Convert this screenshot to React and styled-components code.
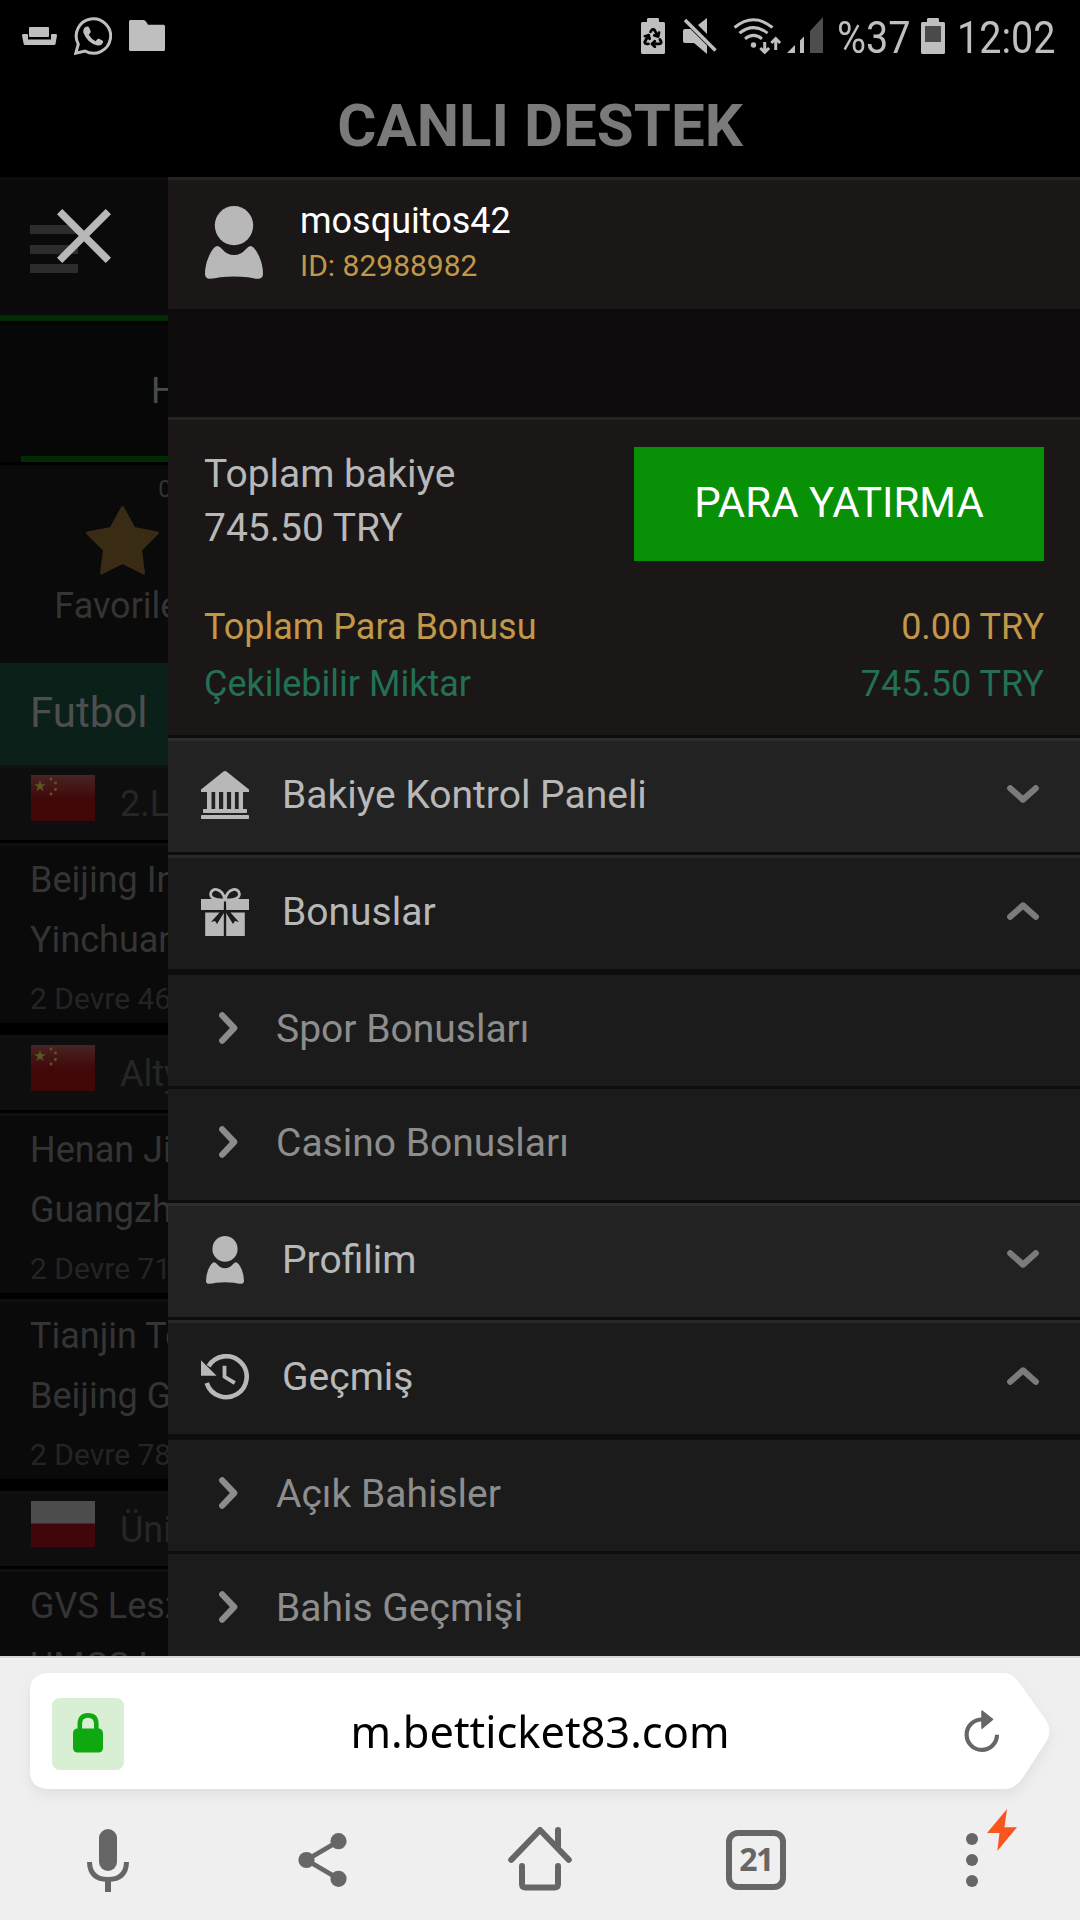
import React from 'react';
import styled, { createGlobalStyle } from 'styled-components';
import { Recycle } from 'lucide-react';

const matches = [
    { league: '2.Liga', flag: 'cn', games: [['Beijing Institute', 'Yinchuan', '2 Devre 46']] },
    {
        league: 'Altyapı',
        flag: 'cn',
        games: [
            ['Henan Jianye', 'Guangzhou', '2 Devre 71'],
            ['Tianjin Teda', 'Beijing Guoan', '2 Devre 78'],
        ],
    },
    { league: 'Üniversite', flag: 'pl', games: [['GVS Leszno', 'UMCS Lublin', '']] },
];

const menu = [
    { label: 'Bakiye Kontrol Paneli', icon: BankIcon },
    { label: 'Bonuslar', icon: GiftIcon, items: ['Spor Bonusları', 'Casino Bonusları'] },
    { label: 'Profilim', icon: UserIcon },
    { label: 'Geçmiş', icon: HistoryIcon, items: ['Açık Bahisler', 'Bahis Geçmişi'] },
];

export default function App() {
    return (
        <Screen>
            <GlobalStyle />
            <StatusBar />
            <SupportBar>CANLI DESTEK</SupportBar>
            <Main>
                <SportsPage />
                <Drawer />
                <CloseButton aria-label="close">
                    <svg width="54" height="54" viewBox="0 0 54 54" stroke="#b8b8b8" strokeWidth="7.5">
                        <path d="M2.6 2.6L51.4 51.4M51.4 2.6L2.6 51.4" />
                    </svg>
                </CloseButton>
            </Main>
            <BrowserBar />
        </Screen>
    );
}

function StatusBar() {
    return (
        <Status>
            <StatusGroup $gap={17}>
                <svg width="35" height="18" viewBox="0 0 35 18" fill="currentColor">
                    <rect x="7" width="20" height="10" rx="1" />
                    <path d="M1 7H5Q6 7 6 8V12.5H29V8Q29 7 30 7H34Q35 7 35 8.5L33.5 17Q33 18 32 18H3Q2 18 1.7 17L0 8.5Q0 7 1 7Z" />
                </svg>
                <svg width="38" height="38" viewBox="0 0 38 38">
                    <path d="M1.8 36.2L4.3 27.2A17.2 17.2 0 1 1 11 34Z" fill="none" stroke="currentColor" strokeWidth="3" />
                    <path d="M12.8 9.6Q14.6 9.3 15.2 10.8L16.6 14Q17 15 16.2 16L14.8 17.8Q17.7 22.6 21.6 24.3L23.3 22.3Q24 21.4 25 21.8L28.4 23.5Q29.6 24.1 29 25.6Q27.6 29 23.6 28.5Q13.5 26.5 9.3 15.5Q8.8 10.5 12.8 9.6Z" fill="currentColor" />
                </svg>
                <svg width="36" height="32" viewBox="0 0 36 32" fill="currentColor">
                    <path d="M1.5 0H14.5Q16 0 17 1.5L19 4.7H34.5Q36 4.7 36 6.2V29.5Q36 31 34.5 31H1.5Q0 31 0 29.5V1.5Q0 0 1.5 0Z" />
                </svg>
            </StatusGroup>
            <StatusGroup $gap={0}>
                <svg width="24" height="36" viewBox="0 0 24 36">
                    <path d="M7 0H17Q18 0 18 1.5V4H22.5Q24 4 24 5.5V34.5Q24 36 22.5 36H1.5Q0 36 0 34.5V5.5Q0 4 1.5 4H6V1.5Q6 0 7 0Z" fill="currentColor" />
                    <Recycle x="1" y="8.5" width="22" height="22" color="#000" strokeWidth={3} />
                </svg>
                <MuteIcon width="34" height="36" viewBox="0 0 34 36" fill="currentColor">
                    <path d="M24 0L15 7L24 16Z" />
                    <path d="M0 13Q0 11 2 11H7.5L24 27.5V36L11 25H2Q0 25 0 23Z" />
                    <path d="M2 2L32.5 32.5" stroke="currentColor" strokeWidth="3.6" />
                </MuteIcon>
                <WifiIcon width="49" height="36" viewBox="0 0 49 36" fill="none" stroke="currentColor" strokeWidth="3">
                    <path d="M1.5 9.5Q20.5 -6 39.5 9.5M6.5 15.2Q20.5 4 34.5 15.2M12 20.8Q20.5 14 29 20.8" />
                    <circle cx="20.5" cy="27" r="2.7" fill="currentColor" stroke="none" />
                    <path d="M31.7 24V34M27.3 30L31.7 34.3L36.1 30M42.7 32V21M38.3 25L42.7 20.7L47.1 25" />
                </WifiIcon>
                <SignalIcon width="36" height="36" viewBox="0 0 36 36" fill="currentColor">
                    <path d="M0 36L8 28V36ZM13 23.5L17 19.5V36H13Z" />
                    <path d="M23 14L36 0V36H23Z" fill="#4d4d4d" />
                </SignalIcon>
                <StatusText $width={70} $left={14}>%37</StatusText>
                <BatteryIcon width="24" height="36" viewBox="0 0 24 36" fill="currentColor">
                    <path d="M7 0H17Q18 0 18 1.5V4H22.5Q24 4 24 5.5V34.5Q24 36 22.5 36H1.5Q0 36 0 34.5V5.5Q0 4 1.5 4H6V1.5Q6 0 7 0Z" />
                    <rect x="4" y="8" width="16" height="16" fill="#4a4a4a" />
                </BatteryIcon>
                <StatusText $width={99} $left={12}>12:02</StatusText>
            </StatusGroup>
        </Status>
    );
}

function SportsPage() {
    return (
        <Sports>
            <SportsHeader>
                <Burger><i /><i /><i /></Burger>
            </SportsHeader>
            <SportsTab>Hepsi</SportsTab>
            <Favorites>
                <Count>0</Count>
                <Star width="75" height="71" viewBox="-1 -1 75 71">
                    <path d="M36.5 1.5L48 22.5L71.5 27L54.5 44L57.5 67L36.5 56.5L15.5 67L18.5 44L1.5 27L25 22.5Z" />
                </Star>
                <span>Favoriler</span>
            </Favorites>
            <SportTitle>Futbol</SportTitle>
            {matches.map((group) => (
                <React.Fragment key={group.league}>
                    <League>
                        <Flag country={group.flag} />
                        <span>{group.league}</span>
                    </League>
                    <Games>
                        {group.games.map(([home, away, time]) => (
                            <Game key={home}>
                                <span>{home}</span>
                                <span>{away}</span>
                                <GameTime>{time}</GameTime>
                            </Game>
                        ))}
                    </Games>
                </React.Fragment>
            ))}
        </Sports>
    );
}

function Flag({ country }) {
    if (country === 'pl') {
        return (
            <svg width="64" height="46" viewBox="0 0 64 46">
                <rect width="64" height="46" fill="#42060a" />
                <rect width="64" height="22.5" fill="#4c4c4c" />
            </svg>
        );
    }
    return (
        <svg width="64" height="46" viewBox="0 0 64 46">
            <defs>
                <linearGradient id="gloss" x1="0" y1="0" x2="0" y2="1">
                    <stop offset="0" stopColor="#482424" />
                    <stop offset="0.5" stopColor="#42090b" />
                    <stop offset="1" stopColor="#400608" />
                </linearGradient>
            </defs>
            <rect width="64" height="46" fill="url(#gloss)" />
            <path d="M9 5L10.4 9.2H14.7L11.2 11.7L12.5 16L9 13.4L5.5 16L6.8 11.7L3.3 9.2H7.6Z" fill="#5a5a1c" />
            <g fill="#5a5a1c">
                <circle cx="20" cy="4" r="1.4" />
                <circle cx="24.5" cy="8" r="1.4" />
                <circle cx="24.5" cy="14.5" r="1.4" />
                <circle cx="20" cy="19" r="1.4" />
            </g>
        </svg>
    );
}

function Drawer() {
    return (
        <Panel>
            <Profile>
                <UserIcon width="58" height="73" />
                <div>
                    <UserName>mosquitos42</UserName>
                    <UserId>ID: 82988982</UserId>
                </div>
            </Profile>
            <Balance>
                <BalanceTop>
                    <div>
                        <p>Toplam bakiye</p>
                        <p>745.50 TRY</p>
                    </div>
                    <DepositButton>PARA YATIRMA</DepositButton>
                </BalanceTop>
                <AmountRow $color="#c19848">
                    <span>Toplam Para Bonusu</span>
                    <span>0.00 TRY</span>
                </AmountRow>
                <AmountRow $color="#237055">
                    <span>Çekilebilir Miktar</span>
                    <span>745.50 TRY</span>
                </AmountRow>
            </Balance>
            {menu.map(({ label, icon: Icon, items }) => (
                <section key={label}>
                    <MenuRow $open={Boolean(items)}>
                        <IconBox><Icon /></IconBox>
                        <MenuLabel>{label}</MenuLabel>
                        <Arrow width="32" height="19" viewBox="0 0 32 19" $up={Boolean(items)}>
                            <path d="M3.2 3.2L16 14.6L28.8 3.2" />
                        </Arrow>
                    </MenuRow>
                    {items && (
                        <SubMenu>
                            {items.map((item) => (
                                <SubRow key={item}>
                                    <SubArrow width="19" height="32" viewBox="0 0 19 32">
                                        <path d="M3.2 3.3L15.2 16L3.2 28.7" />
                                    </SubArrow>
                                    <span>{item}</span>
                                </SubRow>
                            ))}
                        </SubMenu>
                    )}
                </section>
            ))}
        </Panel>
    );
}

function UserIcon({ width = 38, height = 48 }) {
    return (
        <svg width={width} height={height} viewBox="0 0 58 73" fill="#b8b8b8">
            <ellipse cx="29" cy="19.6" rx="19.2" ry="19.6" />
            <path d="M12 40Q14.5 40 17 43Q22 49 29 49Q36 49 41 43Q43.5 40 46 40Q50 41 54 50Q58 59 58 68Q58 72.8 53 72.8Q48 72.5 43 71.3Q29 69.5 15 71.3Q10 72.5 5 72.8Q0 72.8 0 68Q0 59 4 50Q8 41 12 40Z" />
        </svg>
    );
}

function BankIcon() {
    return (
        <svg width="48" height="48" viewBox="0 0 48 48" fill="#b8b8b8">
            <path d="M22.5 0.6Q24 -0.4 25.5 0.6L48 18.5V21H0V18.5Z" />
            <path d="M6 20H10.5V39H6ZM14.2 20H18V39H14.2ZM22.2 20H25.9V39H22.2ZM30.1 20H33.9V39H30.1ZM37.7 20H42V39H37.7Z" />
            <rect x="2" y="38" width="44" height="4" rx="0.8" />
            <rect y="44" width="48" height="4" rx="0.8" />
        </svg>
    );
}

function GiftIcon() {
    return (
        <svg width="48" height="48" viewBox="0 0 48 48" fill="#b8b8b8">
            <path d="M24 12C20 12 9.2 12 9.6 6C10.4 -1 21 -0.5 24 11.5C27 -0.5 37.6 -1 38.4 6C38.8 12 28 12 24 12Z" fill="none" stroke="#b8b8b8" strokeWidth="2.8" />
            <path d="M0 11H23L22.8 22H0ZM25 11H48V22H25.2Z" />
            <path d="M4.2 24.5H18.6L10 34L14 33L16 36L22.8 25V48H4.2ZM43.8 24.5H29.4L38 34L34 33L32 36L25.2 25V48H43.8Z" />
        </svg>
    );
}

function HistoryIcon() {
    return (
        <svg width="48" height="46" viewBox="0 0 48 46" fill="none" stroke="#b8b8b8">
            <path d="M5.7 29A20.5 20.5 0 1 0 7.6 12.2" strokeWidth="4.6" />
            <path d="M0 6.3V21.7H15.6Z" fill="#b8b8b8" stroke="none" />
            <path d="M23.5 11.8V22.8L33.8 29" strokeWidth="3.8" />
        </svg>
    );
}

function BrowserBar() {
    return (
        <Browser>
            <UrlShadow>
                <UrlField>
                    <LockBadge>
                        <svg width="30" height="40" viewBox="0 0 30 40">
                            <path d="M6.8 18V11Q6.8 2.4 15 2.4Q23.3 2.4 23.3 11V18" fill="none" stroke="#10a810" strokeWidth="4.6" />
                            <rect y="15.5" width="30" height="24" rx="4.5" fill="#10a810" />
                        </svg>
                    </LockBadge>
                    <Url>m.betticket83.com</Url>
                    <svg width="36" height="43" viewBox="0 0 36 43" fill="none" stroke="#666" strokeWidth="4.2">
                        <path d="M18 9.5A15.2 15.2 0 1 0 33 24.7" />
                        <path d="M18 1V18.2L28.5 9.4Z" fill="#666" strokeWidth="1.5" strokeLinejoin="round" />
                    </svg>
                </UrlField>
            </UrlShadow>
            <NavBar>
                <svg width="42" height="63" viewBox="0 0 42 63" fill="#666">
                    <rect x="12" width="18" height="42" rx="9" />
                    <path d="M2.5 33Q3 50.5 21 50.5Q39 50.5 39.5 33" fill="none" stroke="#666" strokeWidth="5" />
                    <rect x="18" y="51" width="6" height="12" />
                </svg>
                <ShareIcon width="50" height="54" viewBox="0 0 50 54" fill="#666">
                    <path d="M40.5 8.2L8.5 27L40.5 45.8" fill="none" stroke="#666" strokeWidth="4.8" />
                    <circle cx="40.5" cy="8.2" r="8.1" />
                    <circle cx="8.5" cy="27" r="8.1" />
                    <circle cx="40.5" cy="45.8" r="8.1" />
                </ShareIcon>
                <HomeIcon width="64" height="64" viewBox="0 0 64 64">
                    <path d="M3.2 32.8L32 3L60.8 32.8M50 3V21M14 39V57Q14 60.5 17.5 60.5H46.5Q50 60.5 50 57V39" />
                </HomeIcon>
                <TabCount>21</TabCount>
                <MoreButton>
                    <svg width="12" height="54" viewBox="0 0 12 54" fill="#666">
                        <circle cx="6" cy="6" r="6" />
                        <circle cx="6" cy="27" r="6" />
                        <circle cx="6" cy="48" r="6" />
                    </svg>
                    <Bolt width="30" height="42" viewBox="0 0 30 43" preserveAspectRatio="none" fill="#f8551f">
                        <path d="M20 0L0 24.5H12.5L10.3 43L30 18.8H17.5Z" />
                    </Bolt>
                </MoreButton>
            </NavBar>
        </Browser>
    );
}

const GlobalStyle = createGlobalStyle`
    body {
        margin: 0;
        background: #000;
    }
    * {
        box-sizing: border-box;
    }
    p {
        margin: 0;
    }
    svg {
        flex: none;
        display: block;
    }
`;
const Screen = styled.div`
    display: flex;
    flex-direction: column;
    width: 1080px;
    height: 1920px;
    overflow: hidden;
    background: #000;
    font-family: Roboto, sans-serif;
`;
const Status = styled.div`
    display: flex;
    justify-content: space-between;
    height: 72px;
    padding: 0 24px 0 22px;
    color: #bfbfbf;
`;
const StatusGroup = styled.div`
    display: flex;
    align-items: center;
    gap: ${(props) => props.$gap}px;
`;
const MuteIcon = styled.svg`
    margin-left: 18px;
`;
const WifiIcon = styled.svg`
    margin-left: 16px;
`;
const SignalIcon = styled.svg`
    margin-left: 5px;
    margin-top: -2px;
`;
const BatteryIcon = styled.svg`
    margin-left: 14px;
`;
const StatusText = styled.span`
    width: ${(props) => props.$width}px;
    margin-left: ${(props) => props.$left}px;
    padding-top: 2px;
    font-size: 45px;
    white-space: nowrap;
    transform: scaleX(0.88);
    transform-origin: left;
`;
const SupportBar = styled.div`
    display: flex;
    align-items: center;
    justify-content: center;
    height: 105px;
    padding-top: 2px;
    color: #7a7a7a;
    font-size: 60px;
    font-weight: 700;
`;
const Main = styled.main`
    position: relative;
    display: grid;
    grid-template-columns: 168px 912px;
    height: 1479px;
    overflow: hidden;
`;
const CloseButton = styled.button`
    position: absolute;
    top: 32px;
    left: 57px;
    padding: 0;
    border: 0;
    background: none;
`;
const Sports = styled.div`
    min-width: 0;
    overflow: hidden;
    background: #000;
    color: #343434;
    font-size: 36px;
    white-space: nowrap;
`;
const SportsHeader = styled.div`
    height: 144px;
    padding: 45px 30px 0;
    border-top: 3px solid #0e0e11;
    border-bottom: 6px solid #032b03;
    background: #0a0a0a;
`;
const Burger = styled.div`
    display: grid;
    gap: 10.5px;
    width: 48px;
    i {
        height: 9px;
        background: #2c2c2c;
    }
`;
const SportsTab = styled.div`
    height: 138px;
    margin: 3px 0 3px;
    padding-left: 151px;
    background: linear-gradient(#032b03, #032b03) 21px 100% / 100% 6px no-repeat #070707;
    color: #4a4a4a;
    line-height: 134px;
`;
const Favorites = styled.div`
    display: flex;
    flex-direction: column;
    align-items: center;
    width: 246px;
    height: 198px;
    background: #0a0a0a;
    line-height: 60px;
`;
const Count = styled.span`
    height: 40px;
    padding-left: 84px;
    font-size: 24px;
    line-height: 48px;
`;
const Star = styled.svg`
    margin-right: 2px;
    fill: #3a2b14;
    stroke: #3a2b14;
    stroke-width: 3;
    stroke-linejoin: round;
`;
const SportTitle = styled.div`
    height: 102px;
    padding-left: 30px;
    background: #0a2019;
    color: #4d4f4e;
    font-size: 42px;
    line-height: 100px;
`;
const League = styled.div`
    display: flex;
    gap: 25px;
    height: 75px;
    padding: 6px 31px;
    border-top: 3px solid #101212;
    background: #0e0e0e;
    color: #262626;
    line-height: 60px;
    > svg {
        margin-top: 1px;
    }
`;
const Games = styled.div`
    margin: 3px 0 12px;
`;
const Game = styled.div`
    display: flex;
    flex-direction: column;
    height: 180px;
    padding: 4px 30px;
    border-top: 3px solid #0f0f0f;
    background: #0a0a0a;
    line-height: 60px;
    & + & {
        margin-top: 6px;
    }
`;
const GameTime = styled.span`
    color: #242424;
    font-size: 30px;
    line-height: 57px;
`;
const Panel = styled.aside`
    background: #0e0c0d;
    color: #b8b8b8;
    font-size: 39px;
`;
const Profile = styled.div`
    display: flex;
    gap: 37px;
    height: 132px;
    padding: 18px 37px;
    border-top: 3px solid #262423;
    background: #1b1716;
    > svg {
        margin-top: 8px;
    }
`;
const UserName = styled.div`
    padding-top: 2px;
    color: #fff;
    font-size: 36px;
    line-height: 43px;
`;
const UserId = styled.div`
    color: #c19848;
    font-size: 30px;
    line-height: 45px;
`;
const Balance = styled.div`
    height: 318px;
    margin-top: 108px;
    padding: 27px 36px 0;
    border-top: 3px solid #242423;
    background: #1b1716;
`;
const BalanceTop = styled.div`
    display: flex;
    justify-content: space-between;
    height: 152px;
    line-height: 54px;
`;
const DepositButton = styled.button`
    width: 410px;
    height: 114px;
    padding: 0 0 4px;
    border: 0;
    background: #089006;
    color: #fff;
    font-family: inherit;
    font-size: 42px;
`;
const AmountRow = styled.div`
    display: flex;
    justify-content: space-between;
    color: ${(props) => props.$color};
    font-size: 36px;
    line-height: 57px;
`;
const MenuRow = styled.div`
    display: flex;
    align-items: center;
    height: 114px;
    margin-top: 3px;
    padding: 0 41px 0 33px;
    background: ${(props) => (props.$open ? '#1b1b1b' : '#222')};
    box-shadow: inset 0 3px ${(props) => (props.$open ? '#282828' : '#2d2d2d')};
`;
const IconBox = styled.span`
    display: grid;
    place-items: center;
    width: 48px;
`;
const MenuLabel = styled.span`
    flex: 1;
    margin-left: 33px;
`;
const Arrow = styled.svg`
    margin-bottom: ${(props) => (props.$up ? '4px' : '2px')};
    fill: none;
    stroke: #7b7b7b;
    stroke-width: 6.2;
    stroke-linecap: round;
    stroke-linejoin: round;
    transform: ${(props) => (props.$up ? 'scaleY(-1)' : 'none')};
`;
const SubMenu = styled.div`
    padding-top: 3px;
`;
const SubRow = styled.div`
    display: flex;
    align-items: center;
    gap: 38px;
    height: 111px;
    margin-top: 3px;
    padding: 0 51px 4px;
    background: #1b1b1b;
    color: #8d8d8d;
`;
const SubArrow = styled.svg`
    margin-bottom: 2px;
    fill: none;
    stroke: #8c8c8c;
    stroke-width: 6.2;
    stroke-linecap: round;
    stroke-linejoin: round;
`;
const Browser = styled.footer`
    flex: 1;
    padding: 15px 30px 0;
    border-top: 2px solid #d5d5d5;
    background: #efefef;
`;
const UrlShadow = styled.div`
    filter: drop-shadow(0 6px 6px rgba(0, 0, 0, 0.06));
`;
const UrlField = styled.div`
    display: flex;
    align-items: center;
    height: 116px;
    padding: 0 50px 0 22px;
    background: #fff;
    clip-path: path('M17 0H974Q983 0 990 11L1016 47Q1023 58 1016 69L992 106Q985 116 974 116H17Q0 114 0 99V17Q0 2 17 0Z');
`;
const LockBadge = styled.span`
    display: grid;
    place-items: center;
    width: 72px;
    height: 72px;
    margin-top: 6px;
    border-radius: 8px;
    background: #d8efd4;
    > svg {
        margin-top: -3px;
    }
`;
const Url = styled.span`
    flex: 1;
    padding-right: 8px;
    color: #000;
    font-family: 'Noto Sans', sans-serif;
    font-size: 43.4px;
    text-align: center;
`;
const NavBar = styled.nav`
    display: grid;
    grid-template-columns: repeat(5, 216px);
    place-items: center;
    height: 126px;
    margin: 0 -30px;
    padding-top: 16px;
`;
const ShareIcon = styled.svg`
    margin-right: 2px;
`;
const HomeIcon = styled.svg`
    margin-bottom: 3px;
    fill: none;
    stroke: #666;
    stroke-width: 6;
    stroke-linecap: round;
    stroke-linejoin: round;
`;
const TabCount = styled.span`
    display: grid;
    place-items: center;
    width: 60px;
    height: 60px;
    padding-bottom: 3px;
    border: 6px solid #666;
    border-radius: 12px;
    color: #666;
    font-family: 'Noto Sans', sans-serif;
    font-size: 32px;
    font-weight: 700;
    line-height: 44px;
    letter-spacing: -1.5px;
`;
const MoreButton = styled.span`
    position: relative;
`;
const Bolt = styled.svg`
    position: absolute;
    top: -24px;
    left: 21px;
`;
